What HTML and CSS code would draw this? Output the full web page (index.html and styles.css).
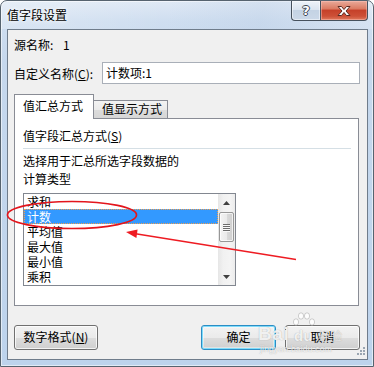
FILE: index.html
```html
<!DOCTYPE html>
<html lang="zh-CN">
<head>
<meta charset="utf-8">
<title>值字段设置</title>
<link rel="stylesheet" href="styles.css">
</head>
<body>
<div class="window">
  <div class="titlebar">
    <span class="title">值字段设置</span>
    <div class="caption">
      <div class="cap-btn help"><span class="q">?</span></div>
      <div class="cap-btn close">
        <svg width="16" height="12" viewBox="0 0 16 12"><path d="M2 1.5h3.5L8 4.5l2.5-3H14L10 6l4 4.5h-3.5L8 7.5l-2.5 3H2L6 6z" fill="#fff" stroke="#5a2a22" stroke-width="1" stroke-linejoin="round"/></svg>
      </div>
    </div>
  </div>
  <div class="client">
    <div class="src"><span class="src-lbl">源名称:</span><span>1</span></div>
    <div class="name-row"><span class="name-lbl">自定义名称(<u>C</u>):</span><div class="input">计数项:1</div></div>
    <div class="tabs">
      <div class="tab active">值汇总方式</div>
      <div class="tab inactive">值显示方式</div>
    </div>
    <div class="panel">
      <div class="group-title">值字段汇总方式(<u>S</u>)</div>
      <div class="sep"></div>
      <div class="desc">选择用于汇总所选字段数据的<br>计算类型</div>
      <div class="listbox">
        <div class="items">
          <div class="item">求和</div>
          <div class="item sel">计数</div>
          <div class="item">平均值</div>
          <div class="item">最大值</div>
          <div class="item">最小值</div>
          <div class="item">乘积</div>
        </div>
        <div class="scrollbar">
          <div class="sb-btn"><svg width="7" height="4" viewBox="0 0 7 4"><path d="M0 4L3.5 0L7 4z" fill="#404040"/></svg></div>
          <div class="thumb">
            <div class="grip-lines"><i></i><i></i><i></i><i></i></div>
          </div>
          <div class="sb-space"></div>
          <div class="sb-btn"><svg width="7" height="4" viewBox="0 0 7 4"><path d="M0 0L3.5 4L7 0z" fill="#404040"/></svg></div>
        </div>
      </div>
    </div>
    <div class="buttons">
      <div class="btn fmt">数字格式(<u>N</u>)</div>
      <div class="btn ok">确定</div>
      <div class="btn cancel">取消</div>
    </div>
    <svg class="size-grip" width="11" height="11" viewBox="0 0 11 11">
      <g fill="#9aa5b1">
        <rect x="8" y="0" width="2" height="2"/>
        <rect x="5" y="3" width="2" height="2"/><rect x="8" y="3" width="2" height="2"/>
        <rect x="2" y="6" width="2" height="2"/><rect x="5" y="6" width="2" height="2"/><rect x="8" y="6" width="2" height="2"/>
      </g>
    </svg>
  </div>
  <svg class="annot" width="374" height="367" viewBox="0 0 374 367">
    <ellipse cx="72" cy="215" rx="64.5" ry="13.5" fill="none" stroke="#e3161d" stroke-width="1.7"/>
    <line x1="296" y1="259.5" x2="134" y2="233.5" stroke="#ee1b22" stroke-width="1.4"/>
    <polygon points="126,232 137.6,229.5 136.4,238" fill="#ee1b22"/>
  </svg>
  <div class="wm">
    <div class="wm-top">
      <span class="wm-bai">Bai</span>
      <span class="wm-paw">
        <svg width="24" height="16" viewBox="0 0 24 16"><g fill="rgba(255,255,255,0.85)" stroke="rgba(150,150,150,0.55)" stroke-width="0.8"><ellipse cx="4" cy="10" rx="2.6" ry="3.2"/><ellipse cx="9" cy="4" rx="2.6" ry="3.2"/><ellipse cx="15" cy="4" rx="2.6" ry="3.2"/><ellipse cx="20" cy="10" rx="2.6" ry="3.2"/></g></svg>
        <span class="wm-du">du</span>
      </span>
      <span class="wm-jy">经验</span>
    </div>
    <div class="wm-url">jingyan.baidu.com</div>
  </div>
</div>
</body>
</html>
```
FILE: styles.css
```css
* { box-sizing: border-box; }
html, body { margin: 0; padding: 0; }
body {
  width: 374px;
  height: 367px;
  overflow: hidden;
  background: #ffffff;
  font-family: "Noto Sans CJK SC", "Noto Sans", sans-serif;
  font-size: 12px;
  color: #000;
}
u { text-decoration: underline; text-underline-offset: 1px; }

.window {
  position: relative;
  width: 374px;
  height: 367px;
  border: 1px solid #56636f;
  border-radius: 7px 7px 0 0;
  background: linear-gradient(180deg, #dfe9f5 0px, #cfdef0 20px, #c6d8ed 60px, #bdd3ec 100%);
  box-shadow: inset 0 0 0 1px rgba(255,255,255,0.55);
  display: flex;
  flex-direction: column;
  overflow: hidden;
}

.titlebar {
  flex: none;
  height: 28px;
  display: flex;
  background: linear-gradient(100deg, rgba(255,255,255,0.25) 0%, rgba(255,255,255,0) 45%, rgba(180,200,225,0.25) 70%, rgba(255,255,255,0.15) 100%);
}
.title {
  padding-left: 6px;
  line-height: 28px;
  font-size: 12px;
  color: #000;
  text-shadow: 0 0 6px #fff, 0 0 3px #fff;
}
.caption {
  margin-left: auto;
  margin-right: 5px;
  display: flex;
  height: 20px;
}
.cap-btn {
  height: 20px;
  border: 1px solid #46515d;
  border-top: none;
  display: flex;
  align-items: center;
  justify-content: center;
}
.help {
  width: 29px;
  border-right: none;
  border-radius: 0 0 0 4px;
  background: linear-gradient(180deg, #eef3f9 0%, #dbe5f0 45%, #c4d3e4 50%, #cbd8e8 100%);
  box-shadow: inset 0 0 0 1px rgba(255,255,255,0.5);
}
.help .q {
  font-family: "DejaVu Sans", sans-serif;
  font-weight: bold;
  font-size: 13px;
  line-height: 13px;
  color: #fff;
  text-shadow: 1px 0 0 #3b4552, -1px 0 0 #3b4552, 0 1px 0 #3b4552, 0 -1px 0 #3b4552;
}
.close {
  width: 48px;
  border-radius: 0 0 4px 0;
  background: linear-gradient(180deg, #e9aa9a 0%, #db7c64 40%, #c6412a 50%, #cd5037 80%, #e07a5e 100%);
  box-shadow: inset 0 0 0 1px rgba(255,200,190,0.45);
}

.client {
  flex: 1;
  position: relative;
  margin: 0 5px 6px 6px;
  border: 1px solid #6f7c8b;
  background: #f0f0f0;
  padding: 0 7px 0 6px;
  display: flex;
  flex-direction: column;
}

.src {
  margin-top: 7px;
  height: 16px;
  line-height: 16px;
  display: flex;
}
.src-lbl { width: 49px; }

.name-row {
  margin-top: 9px;
  height: 22px;
  display: flex;
  align-items: center;
}
.name-lbl { width: 88px; flex: none; }
.input {
  flex: 1;
  height: 22px;
  border: 1px solid #a9afb8;
  background: #fff;
  padding-left: 3px;
  line-height: 20px;
}

.tabs {
  margin-top: 10px;
  height: 24px;
  display: flex;
  align-items: flex-end;
}
.tab {
  border: 1px solid #898c95;
  border-bottom: none;
  padding-left: 8px;
}
.active {
  position: relative;
  z-index: 1;
  width: 80px;
  height: 25px;
  margin-bottom: -1px;
  background: #fff;
  line-height: 22px;
}
.inactive {
  width: 74px;
  height: 18px;
  border-left: none;
  background: linear-gradient(180deg, #f3f3f3 0%, #ebebeb 50%, #dcdcdc 51%, #d6d6d6 100%);
  line-height: 15px;
}

.panel {
  width: 345px;
  height: 188px;
  border: 1px solid #898c95;
  background: #fff;
  padding: 8px 7px 0 8px;
}
.group-title { line-height: 17px; height: 17px; }
.sep { margin-top: 4px; height: 1px; background: #d5dfe5; }
.desc { margin-top: 3px; line-height: 18px; }

.listbox {
  margin-top: 5px;
  width: 213px;
  height: 93px;
  border: 1px solid #828790;
  display: flex;
  background: #fff;
}
.items { flex: 1; }
.item {
  height: 15px;
  line-height: 15px;
  padding-left: 3px;
  white-space: nowrap;
}
.sel {
  background: #3399ff;
  color: #fff;
  outline: 1px dotted #f0a050;
  outline-offset: -1px;
}

.scrollbar {
  width: 17px;
  display: flex;
  flex-direction: column;
  background: linear-gradient(90deg, #e6e6e6 0%, #f1f1f1 30%, #f4f4f4 70%, #ececec 100%);
}
.sb-btn {
  height: 17px;
  display: flex;
  align-items: center;
  justify-content: center;
}
.thumb {
  margin: 1px 1px 0 1px;
  height: 30px;
  border: 1px solid #979797;
  border-radius: 2px;
  background: linear-gradient(90deg, #f3f3f3 0%, #eaeaea 50%, #dadada 51%, #cfcfcf 100%);
  box-shadow: inset 0 0 0 1px rgba(255,255,255,0.7);
  display: flex;
  align-items: center;
  justify-content: center;
}
.grip-lines { display: flex; flex-direction: column; gap: 1px; }
.grip-lines i {
  display: block;
  width: 7px;
  height: 1px;
  background: #6b6b6b;
  box-shadow: 0 1px 0 #f8f8f8;
}
.sb-space { flex: 1; }

.buttons {
  margin-top: 19px;
  height: 25px;
  display: flex;
}
.btn {
  height: 25px;
  border: 1px solid #707070;
  border-radius: 3px;
  background: linear-gradient(180deg, #f2f2f2 0%, #ebebeb 50%, #dddddd 51%, #cfcfcf 100%);
  box-shadow: inset 0 0 0 1px rgba(255,255,255,0.75);
  text-align: center;
  line-height: 22px;
}
.fmt { width: 84px; }
.ok {
  margin-left: auto;
  width: 75px;
  border-color: #2c8dc4;
  box-shadow: inset 0 0 0 1px #7fdcfb, inset 0 0 0 2px rgba(255,255,255,0.4);
}
.cancel { margin-left: 9px; width: 75px; }

.size-grip {
  position: absolute;
  right: 1px;
  bottom: 1px;
}

.annot {
  position: absolute;
  left: -1px;
  top: -1px;
  pointer-events: none;
  z-index: 5;
}

.wm {
  position: absolute;
  left: 257px;
  top: 311px;
  z-index: 4;
  width: 100px;
  color: rgba(255,255,255,0.85);
  text-shadow: 0 0 1px rgba(110,110,110,0.6);
  pointer-events: none;
}
.wm-top { display: flex; align-items: flex-end; height: 32px; }
.wm-bai {
  font-family: "Liberation Sans", Arial, sans-serif;
  font-weight: bold;
  font-size: 19px;
  line-height: 20px;
  letter-spacing: 0.5px;
}
.wm-paw {
  position: relative;
  width: 26px;
  height: 32px;
  margin-left: 3px;
}
.wm-paw svg { position: absolute; left: 0; top: 0; }
.wm-du {
  position: absolute;
  left: 2px;
  bottom: 0;
  font-family: "Liberation Sans", Arial, sans-serif;
  font-weight: bold;
  font-size: 15px;
  line-height: 16px;
}
.wm-jy {
  font-size: 12px;
  line-height: 16px;
  color: rgba(255,255,255,0.7);
}
.wm-url {
  font-family: "Liberation Sans", Arial, sans-serif;
  font-size: 8.5px;
  line-height: 10px;
  letter-spacing: 0.2px;
  padding-left: 2px;
}
```
